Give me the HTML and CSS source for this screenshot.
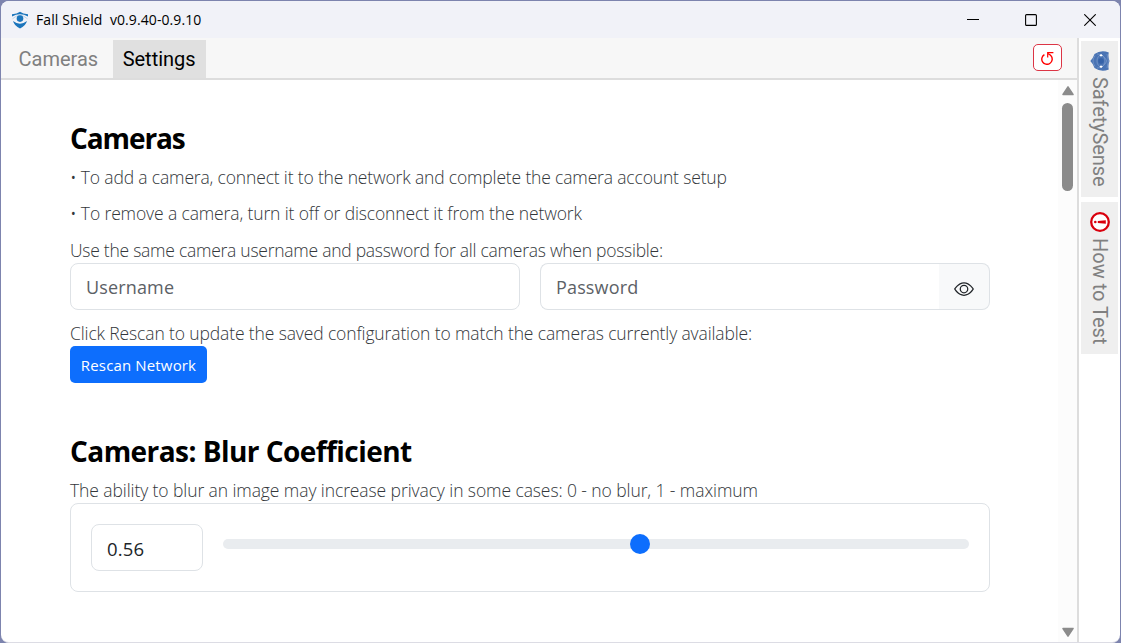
FILE: index.html
```html
<!DOCTYPE html>
<html lang="en">
<head>
    <meta charset="UTF-8">
    <meta name="viewport" content="width=device-width, initial-scale=1.0">
    <title>Fall Shield</title>
    <link rel="stylesheet" href="styles.css">
</head>
<body>
    <div class="window">
        <!-- Title bar -->
        <div class="titlebar">
            <svg class="logo" viewBox="0 0 18 18" width="18" height="18">
                <path d="M1 3.200Q6 3 9 .8Q12 3 17 3.200V5.600Q9 .8 1 5.600Z" fill="#1b75bc"/>
                <path d="M1.500 7.800Q9 1 16.500 7.800" fill="none" stroke="#a9cdea" stroke-width=".8"/>
                <circle cx="9" cy="7.600" r="3.300" fill="#1b75bc"/>
                <path d="M2 10Q9 15.400 16 10Q14.600 15 9 17.500Q3.400 15 2 10Z" fill="#1b75bc"/>
            </svg>
            <span class="title">Fall Shield&nbsp; v0.9.40-0.9.10</span>
            <div class="controls">
                <svg viewBox="0 0 12 12" width="12" height="12"><path d="M0 5.500H12"/></svg>
                <svg viewBox="0 0 12 12" width="12" height="12"><rect x=".6" y=".6" width="10.800" height="10.800" rx="1"/></svg>
                <svg viewBox="0 0 12 12" width="12" height="12"><path d="M.3 .3L11.700 11.700M11.700 .3L.3 11.700"/></svg>
            </div>
        </div>

        <div class="body">
            <div class="left">
                <!-- Tabs -->
                <div class="tabs">
                    <div class="tab">Cameras</div>
                    <div class="tab active">Settings</div>
                    <button class="reset" aria-label="Reset">
                        <svg viewBox="0 0 14 14" width="14" height="14">
                            <path d="M3.400 3.600A5.200 5.200 0 1 0 10.300 5.200Q9.300 3.400 6.900 2.600" fill="none" stroke="#f00" stroke-width="1.400"/>
                            <path d="M12.400 1.700H6.700V6.500" fill="none" stroke="#f00" stroke-width="1.200"/>
                        </svg>
                    </button>
                </div>

                <div class="scroller">
                    <div class="content">
                        <h2 class="first">Cameras</h2>
                        <p class="add">• To add a camera, connect it to the network and complete the camera account setup</p>
                        <p class="remove">• To remove a camera, turn it off or disconnect it from the network</p>
                        <p class="label credentials">Use the same camera username and password for all cameras when possible:</p>
                        <div class="fields">
                            <input class="field" type="text" placeholder="Username">
                            <div class="password">
                                <input class="field" type="password" placeholder="Password">
                                <button class="eye" aria-label="Show password">
                                    <svg viewBox="0 0 16 16" width="20" height="20" fill="#212529">
                                        <path d="M16 8s-3-5.500-8-5.500S0 8 0 8s3 5.500 8 5.500S16 8 16 8M1.173 8a13 13 0 0 1 1.660-2.043C4.120 4.668 5.880 3.500 8 3.500s3.879 1.168 5.168 2.457A13 13 0 0 1 14.828 8q-.086.130-.195.288c-.335.480-.830 1.120-1.465 1.755C11.879 11.332 10.119 12.500 8 12.500s-3.879-1.168-5.168-2.457A13 13 0 0 1 1.172 8z"/>
                                        <path d="M8 5.500a2.500 2.500 0 1 0 0 5 2.500 2.500 0 0 0 0-5M4.500 8a3.500 3.500 0 1 1 7 0 3.500 3.500 0 0 1-7 0"/>
                                    </svg>
                                </button>
                            </div>
                        </div>
                        <p class="label rescan-label">Click Rescan to update the saved configuration to match the cameras currently available:</p>
                        <button class="rescan">Rescan Network</button>

                        <h2>Cameras: Blur Coefficient</h2>
                        <p class="label blur-label">The ability to blur an image may increase privacy in some cases: 0 - no blur, 1 - maximum</p>
                        <div class="card">
                            <input class="field value" type="text" value="0.56">
                            <input class="range" type="range" min="0" max="1" step="0.01" value="0.56">
                        </div>
                    </div>
                    <!-- Scrollbar -->
                    <div class="scrollbar">
                        <svg viewBox="0 0 12 10" width="12" height="10"><path d="M6 .8L11 8.500H1Z"/></svg>
                        <div class="thumb"></div>
                        <svg viewBox="0 0 12 10" width="12" height="10"><path d="M6 9.200L11 1.500H1Z"/></svg>
                    </div>
                </div>
            </div>

            <!-- Side tabs -->
            <div class="side">
                <div class="side-tab safety">
                    <svg viewBox="0 0 20 20" width="20" height="20">
                        <path d="M.3 10Q3 7.500 4.500 3Q11 -1.500 18.800 1.500Q17.800 5.500 19.500 10Q17.800 14.500 18.800 18.500Q11 21.500 4.500 17Q3 12.500 .3 10Z" fill="#4a74b4"/>
                        <path d="M5 4.500Q1 10 5 15.500M17 3Q20 10 17 17M7 3Q13 3 17 10Q13 17 7 17" fill="none" stroke="#86a2d0" stroke-width=".6"/>
                        <ellipse cx="11" cy="10" rx="4" ry="5.800" fill="none" stroke="#86a2d0" stroke-width=".6"/>
                        <circle cx="11" cy="10" r="2.800" fill="#3562a8"/>
                        <path d="M9.500 4.700L11 2.800L12.800 4.700L11 5.600ZM9.500 15.300L11 17.200L12.800 15.300L11 14.400Z" fill="#fff"/>
                    </svg>
                    <span>SafetySense</span>
                </div>
                <div class="side-tab howto">
                    <svg viewBox="0 0 20 20" width="20" height="20">
                        <circle cx="10" cy="10" r="8.800" fill="#fff" stroke="#d9000d" stroke-width="2.300"/>
                        <path d="M7.800 8.900L15.800 8.200V11.800L7.800 11.100Z" fill="#d9000d"/>
                        <circle cx="5.300" cy="10" r="1.300" fill="#d9000d"/>
                    </svg>
                    <span>How to Test</span>
                </div>
            </div>
        </div>
    </div>
</body>
</html>
```
FILE: styles.css
```css
* {
    margin: 0;
    padding: 0;
    box-sizing: border-box;
}

body {
    height: 643px;
    overflow: hidden;
    padding: 1px;
    background: #7d84ae;
    font-family: "Open Sans", "Noto Sans", sans-serif;
}

.window {
    height: 642px;
    display: flex;
    flex-direction: column;
    background: #fff;
    border-bottom: 1px solid #dcdce4;
    border-radius: 8px;
    overflow: hidden;
}

/* Title bar */
.titlebar {
    height: 37px;
    flex-shrink: 0;
    display: flex;
    align-items: center;
    padding: 0 24px 0 10px;
    background: #f1f2f8;
}

.title {
    margin-left: 7px;
    font-size: 14px;
    letter-spacing: 0.090px;
    color: #000;
}

.controls {
    display: flex;
    gap: 47px;
    margin-left: auto;
}

.controls svg {
    fill: none;
    stroke: #000;
    stroke-width: 1.100;
}

.controls svg:first-child {
    margin-right: -1px;
}

.body {
    flex: 1;
    display: flex;
    min-height: 0;
}

.left {
    width: 1078px;
    display: flex;
    flex-direction: column;
    border-right: 2px solid #ddd;
}

/* Tabs */
.tabs {
    height: 42px;
    display: flex;
    align-items: center;
    padding: 2px 15px 0 7.500px;
    background: #f7f7f7;
    border-bottom: 2px solid #ddd;
}

.tab {
    height: 38px;
    padding: 0 10px;
    font: 20px/38px Roboto, sans-serif;
    color: #808080;
}

.tab.active {
    margin-left: 4.500px;
    background: #e0e0e0;
    color: #000;
}

.reset {
    width: 29px;
    height: 27px;
    display: flex;
    align-items: center;
    justify-content: center;
    margin: -3px 0 0 auto;
    background: #fff;
    border: 1px solid #dc3545;
    border-radius: 5px;
}

/* Settings page */
.scroller {
    flex: 1;
    display: flex;
    min-height: 0;
}

.content {
    flex: 1;
    padding: 37px 68px 0 69px;
}

h2 {
    margin-bottom: 4px;
    font-size: 28px;
    line-height: 42px;
    font-weight: 700;
    letter-spacing: -0.550px;
    color: #000;
}

h2.first {
    letter-spacing: -1.100px;
}

p {
    margin-bottom: 9px;
    padding-top: 2px;
    font-size: 17.500px;
    line-height: 25px;
    font-weight: 300;
    color: #33373b;
    white-space: nowrap;
}

.add {
    letter-spacing: -0.160px;
}

.remove {
    margin-bottom: 10px;
    letter-spacing: -0.130px;
}

.credentials {
    letter-spacing: -0.260px;
}

.rescan-label {
    letter-spacing: -0.130px;
}

.blur-label {
    letter-spacing: -0.090px;
}

p.label {
    margin-bottom: 0;
}

.fields {
    display: grid;
    grid-template-columns: 450px 450px;
    gap: 20px;
    margin-bottom: 9px;
}

.field {
    width: 100%;
    height: 47px;
    padding: 0 15px;
    font: 18px "Open Sans", "Noto Sans", sans-serif;
    letter-spacing: 0.150px;
    color: #212529;
    background: #fff;
    border: 1px solid #dee2e6;
    border-radius: 8px;
}

.field::placeholder {
    color: #5c6166;
}

.password {
    display: flex;
}

.password .field {
    width: 399px;
    border-right: 0;
    border-radius: 8px 0 0 8px;
}

.eye {
    width: 51px;
    display: flex;
    align-items: center;
    justify-content: center;
    padding-top: 4px;
    background: #f8f9fa;
    border: 1px solid #dee2e6;
    border-left: 0;
    border-radius: 0 8px 8px 0;
}

.rescan {
    display: block;
    width: 137px;
    height: 37px;
    margin-bottom: 47px;
    font: 15px "Open Sans", "Noto Sans", sans-serif;
    letter-spacing: 0.150px;
    color: #fff;
    background: #0d6efd;
    border: 0;
    border-radius: 5px;
    white-space: nowrap;
}

.card {
    width: 920px;
    height: 89px;
    display: flex;
    gap: 20px;
    padding: 20px;
    border: 1px solid #dee2e6;
    border-radius: 8px;
}

.card .value {
    width: 112px;
    padding-top: 2px;
    font-size: 18.500px;
}

.range {
    width: 746px;
    height: 20px;
    margin-top: 10px;
    appearance: none;
    background: none;
}

.range::-webkit-slider-runnable-track {
    height: 10px;
    background: #e9ecef;
    border-radius: 5px;
}

.range::-webkit-slider-thumb {
    appearance: none;
    width: 20px;
    height: 20px;
    margin-top: -5px;
    background: #0d6efd;
    border-radius: 50%;
}

/* Scrollbar */
.scrollbar {
    width: 19px;
    display: flex;
    flex-direction: column;
    align-items: center;
    padding: 6px 0 5px;
    background: #fcfcfc;
}

.scrollbar svg {
    fill: #8b8b8b;
    stroke: #8b8b8b;
    stroke-width: 1.500;
    stroke-linejoin: round;
}

.thumb {
    width: 11px;
    height: 88px;
    margin: 7px 0 auto;
    background: #8b8b8b;
    border-radius: 6px;
}

/* Side tabs */
.side {
    flex: 1;
    display: flex;
    flex-direction: column;
    gap: 5px;
    padding: 3px 1px 0 2px;
}

.side-tab {
    width: 37px;
    display: flex;
    flex-direction: column;
    align-items: center;
    padding-top: 10px;
    background: #efefef;
}

.side-tab span {
    margin-top: 6px;
    font: 20px/24px Roboto, sans-serif;
    color: #808080;
    writing-mode: vertical-rl;
}

.safety {
    height: 156px;
}

.safety span {
    letter-spacing: -0.100px;
}

.howto {
    height: 152px;
}
```
